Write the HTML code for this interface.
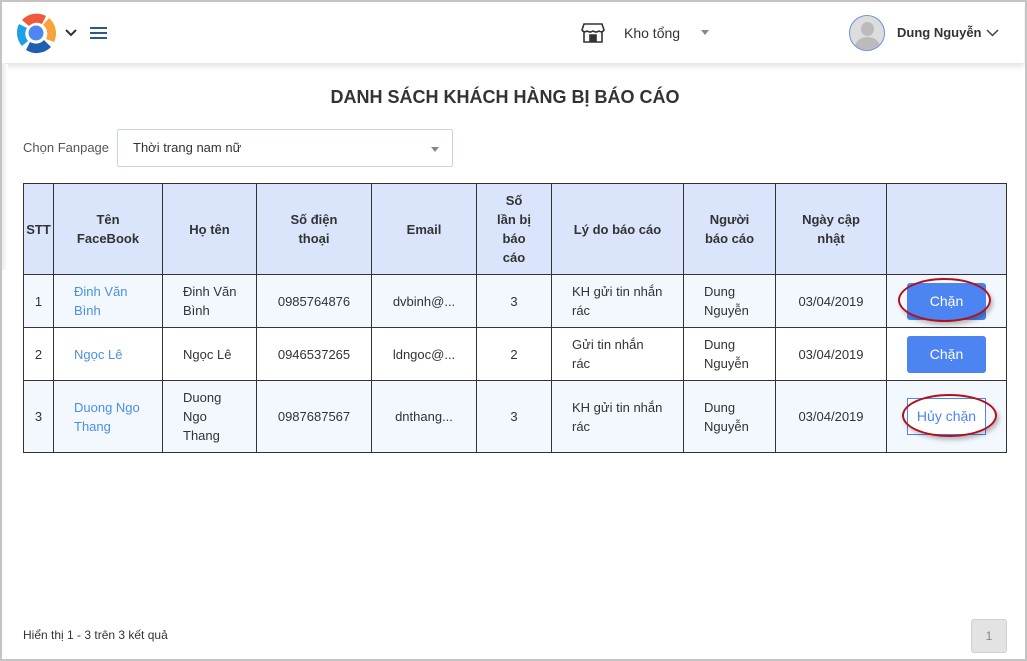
<!DOCTYPE html>
<html><head><meta charset="utf-8"><style>
*{box-sizing:border-box;margin:0;padding:0}
body{width:1027px;height:661px;overflow:hidden;background:#fff;font-family:"Liberation Sans",Arial,sans-serif;position:relative;color:#333}
.frame{position:absolute;left:0;top:0;width:1027px;height:661px;border:2px solid #c4c4c4;border-right:2px solid #c4c4c4;border-bottom:2px solid #c4c4c4;pointer-events:none}
.hdr{position:absolute;left:2px;top:2px;width:1022px;height:61px;background:#fff;box-shadow:0 3px 6px rgba(0,0,0,.12)}
.abs{position:absolute}
.leftsh{position:absolute;left:2px;top:64px;width:6px;height:206px;background:linear-gradient(90deg,#ececec,#fff)}
table{position:absolute;left:23px;top:183px;border-collapse:collapse;table-layout:fixed;font-size:13px}
td,th{border:1px solid #333;text-align:center;vertical-align:middle;line-height:19px;color:#333}
th{background:#dae5fb;font-weight:bold;font-size:13px}
.r1 td,.r3 td{background:#f3f7fe}
.l{text-align:left;padding-left:20px}
.blue{color:#4a90e2}
.btn{display:inline-block;width:79px;height:37px;line-height:37px;border-radius:3px;background:#4c84f2;color:#fff;font-size:14px}
.btn2{display:inline-block;width:79px;height:37px;line-height:35px;border:1px solid #4c84f2;background:#fff;color:#4c84f2;font-size:14px}
.oval{position:absolute;border:2px solid #b0121b;border-radius:50%;box-shadow:2px 3px 4px rgba(0,0,0,.25)}
</style></head><body>
<div class="hdr"></div>
<div class="leftsh"></div>
<svg class="abs" style="left:16px;top:12px" width="42" height="42" viewBox="0 0 42 42">
<path d="M6 8 A20 20 0 0 1 30 4 L26 12 A11 11 0 0 0 13 14 Z" fill="#f05a3a"/>
<path d="M33 6 A20 20 0 0 1 38 30 L30 27 A11 11 0 0 0 27 13 Z" fill="#f7a23a"/>
<path d="M35 35 A20 20 0 0 1 10 38 L14 30 A11 11 0 0 0 28 28 Z" fill="#1d5fb0"/>
<path d="M6 34 A20 20 0 0 1 3 12 L11 16 A11 11 0 0 0 12 29 Z" fill="#1ea0e8"/>
<circle cx="20" cy="21" r="7.5" fill="#4e86f6"/>
</svg>
<svg class="abs" style="left:65px;top:29px" width="12" height="8"><path d="M1 1 L6 6 L11 1" stroke="#333" stroke-width="2" fill="none"/></svg>
<div class="abs" style="left:90px;top:27px;width:17px;height:2px;background:#2a5a8a"></div>
<div class="abs" style="left:90px;top:32px;width:17px;height:2px;background:#2a5a8a"></div>
<div class="abs" style="left:90px;top:37px;width:17px;height:2px;background:#2a5a8a"></div>
<svg class="abs" style="left:581px;top:23px" width="24" height="20" viewBox="0 0 24 20"><path d="M3 1 H21 L23 7 Q21 10 18 8 Q15 10 12 8 Q9 10 6 8 Q3 10 1 7 Z M3 9 V19 H21 V9 M9 19 V12 H15 V19" stroke="#333" stroke-width="1.6" fill="none"/><rect x="9" y="12" width="6" height="7" fill="#333"/></svg>
<div class="abs" style="left:624px;top:25px;font-size:14px;color:#333">Kho tổng</div>
<div class="abs" style="left:701px;top:30px;width:0;height:0;border-left:4px solid transparent;border-right:4px solid transparent;border-top:5px solid #888"></div>
<div class="abs" style="left:849px;top:15px;width:36px;height:36px;border-radius:50%;border:1px solid #6b8fe0;background:#ddd;overflow:hidden">
<div class="abs" style="left:11px;top:6px;width:13px;height:14px;border-radius:50%;background:#bbb"></div>
<div class="abs" style="left:5px;top:21px;width:25px;height:20px;border-radius:50% 50% 0 0;background:#bbb"></div></div>
<div class="abs" style="left:897px;top:25px;font-size:13px;font-weight:bold;color:#333">Dung Nguyễn</div>
<svg class="abs" style="left:986px;top:29px" width="13" height="8"><path d="M1 1 L6.5 6.5 L12 1" stroke="#444" stroke-width="1.5" fill="none"/></svg>
<div class="abs" style="left:0;top:87px;width:1010px;text-align:center;font-size:18px;font-weight:bold;color:#333">DANH SÁCH KHÁCH HÀNG BỊ BÁO CÁO</div>
<div class="abs" style="left:23px;top:140px;font-size:13px;color:#555">Chọn Fanpage</div>
<div class="abs" style="left:117px;top:129px;width:336px;height:38px;border:1px solid #c9d3e6;border-radius:2px"></div>
<div class="abs" style="left:133px;top:140px;font-size:13px;color:#333">Thời trang nam nữ</div>
<div class="abs" style="left:431px;top:147px;border-left:4px solid transparent;border-right:4px solid transparent;border-top:5px solid #888"></div>
<table>
<colgroup><col style="width:30px"><col style="width:109px"><col style="width:94px"><col style="width:115px"><col style="width:105px"><col style="width:75px"><col style="width:132px"><col style="width:92px"><col style="width:111px"><col style="width:120px"></colgroup>
<tr style="height:91px"><th>STT</th><th>Tên<br>FaceBook</th><th>Họ tên</th><th>Số điện<br>thoại</th><th>Email</th><th>Số<br>lần bị<br>báo<br>cáo</th><th>Lý do báo cáo</th><th>Người<br>báo cáo</th><th>Ngày cập<br>nhật</th><th></th></tr>
<tr class="r1" style="height:53px"><td>1</td><td class="l blue">Đinh Văn<br>Bình</td><td class="l">Đinh Văn<br>Bình</td><td>0985764876</td><td>dvbinh@...</td><td>3</td><td class="l">KH gửi tin nhắn<br>rác</td><td class="l">Dung<br>Nguyễn</td><td>03/04/2019</td><td><span class="btn">Chặn</span></td></tr>
<tr class="r2" style="height:53px"><td>2</td><td class="l blue">Ngọc Lê</td><td class="l">Ngọc Lê</td><td>0946537265</td><td>ldngoc@...</td><td>2</td><td class="l">Gửi tin nhắn<br>rác</td><td class="l">Dung<br>Nguyễn</td><td>03/04/2019</td><td><span class="btn">Chặn</span></td></tr>
<tr class="r3" style="height:72px"><td>3</td><td class="l blue">Duong Ngo<br>Thang</td><td class="l">Duong<br>Ngo<br>Thang</td><td>0987687567</td><td>dnthang...</td><td>3</td><td class="l">KH gửi tin nhắn<br>rác</td><td class="l">Dung<br>Nguyễn</td><td>03/04/2019</td><td><span class="btn2">Hủy chặn</span></td></tr>
</table>
<div class="oval" style="left:898px;top:278px;width:93px;height:44px"></div>
<div class="oval" style="left:902px;top:394px;width:95px;height:43px"></div>
<div class="abs" style="left:23px;top:628px;font-size:12px;color:#333">Hiển thị 1 - 3 trên 3 kết quả</div>
<div class="abs" style="left:971px;top:619px;width:36px;height:34px;background:#e3e3e3;border:1px solid #d0d0d0;border-radius:3px;text-align:center;line-height:32px;font-size:12px;color:#888">1</div>
<div class="frame"></div>
</body></html>
